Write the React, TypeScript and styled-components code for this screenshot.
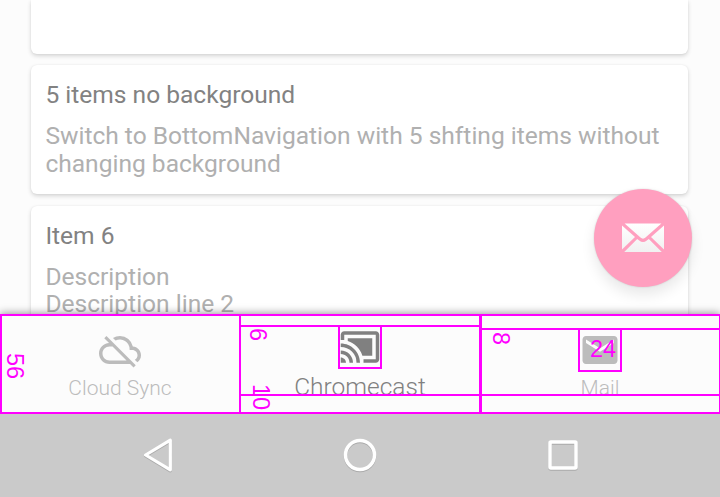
import React from "react";
import styled, { createGlobalStyle } from "styled-components";
import { MdCastConnected, MdCloudOff, MdEmail } from "react-icons/md";

const GUIDE = "#ff00ff";

const GlobalStyle = createGlobalStyle`
  * { box-sizing: border-box; }
  body {
    margin: 0;
    background: #fcfcfc;
    font-family: Roboto, "Liberation Sans", sans-serif;
  }
`;

const Screen = styled.div`
  position: relative;
  display: flex;
  flex-direction: column;
  width: 720px;
  height: 497px;
  overflow: hidden;
  background: #fcfcfc;
`;

const List = styled.main`
  display: flex;
  flex-direction: column;
  gap: 11.5px;
  height: 314px;
  flex: none;
  padding: 0 31.6px 0 31.4px;
`;

const Card = styled.article<{ $height: number; $continued?: boolean }>`
  flex: none;
  height: ${(p) => p.$height}px;
  padding: 16px 14px;
  background: #fff;
  border-radius: ${(p) => (p.$continued ? "0 0 6px 6px" : "6px")};
  box-shadow: 0 2px 4px rgba(0, 0, 0, 0.16), 0 0 2px rgba(0, 0, 0, 0.06);
`;

const Title = styled.h2`
  margin: 0 0 13px;
  font-size: 24.55px;
  line-height: 28px;
  font-weight: 400;
  color: #828282;
`;

const Description = styled.p`
  margin: 0;
  font-size: 24.55px;
  line-height: 27.5px;
  color: #b0b0b0;
  white-space: pre-line;
`;

const Fab = styled.button`
  position: absolute;
  left: 594px;
  top: 189px;
  width: 98px;
  height: 98px;
  display: grid;
  place-items: center;
  padding: 0;
  border: 0;
  border-radius: 50%;
  background: #ff9fbf;
  box-shadow: 0 8px 14px rgba(0, 0, 0, 0.09), 0 0 2px rgba(0, 0, 0, 0.15);
`;

const Tabs = styled.nav`
  position: relative;
  display: grid;
  grid-template-columns: repeat(3, 1fr);
  height: 100px;
  flex: none;
  background: #fcfcfc;
  box-shadow: 0 -1px 8px rgba(0, 0, 0, 0.4);
`;

const Tab = styled.div<{ $active?: boolean }>`
  display: flex;
  flex-direction: column;
  align-items: center;
  padding-top: ${(p) => (p.$active ? 11.5 : 15)}px;
  color: ${(p) => (p.$active ? "#808080" : "#bcbcbc")};

  svg {
    display: block;
    width: 42px;
    height: 42px;
    flex: none;
  }
`;

const TabLabel = styled.span<{ $active?: boolean }>`
  margin-top: ${(p) => (p.$active ? 5 : 3)}px;
  font-size: ${(p) => (p.$active ? 24.5 : 21)}px;
  line-height: 28px;
  font-weight: 300;
`;

const SystemBar = styled.footer`
  position: relative;
  display: grid;
  grid-template-columns: 202.5px 202.5px 202.5px;
  justify-content: center;
  align-items: center;
  justify-items: center;
  flex: 1;
  padding-bottom: 1px;
  background: #cacaca;

  svg {
    display: block;
    filter: drop-shadow(0 1px 0.5px rgba(0, 0, 0, 0.16));
  }
`;

const GuideBox = styled.div<{ $x: number; $y: number; $w: number; $h: number }>`
  position: absolute;
  left: ${(p) => p.$x}px;
  top: ${(p) => p.$y}px;
  width: ${(p) => p.$w}px;
  height: ${(p) => p.$h}px;
  border: 2px solid ${GUIDE};
`;

const Measure = styled.span<{ $x: number; $y: number; $upright?: boolean }>`
  position: absolute;
  left: ${(p) => p.$x}px;
  top: ${(p) => p.$y}px;
  font-family: "Liberation Sans", Arial, sans-serif;
  font-size: 23.5px;
  line-height: 24px;
  color: ${GUIDE};
  writing-mode: ${(p) => (p.$upright ? "horizontal-tb" : "vertical-rl")};
`;

const Envelope = () => (
  <svg width="42" height="30" viewBox="0 0 42 30">
    <defs>
      <linearGradient id="paper" x1="0" y1="0" x2="0" y2="30" gradientUnits="userSpaceOnUse">
        <stop offset="0" stopColor="#fff" />
        <stop offset="1" stopColor="#f0f0f0" />
      </linearGradient>
    </defs>
    <g fill="url(#paper)">
      <path d="M2.6 .5H39.4L23.5 14.6Q21 16.9 18.5 14.6Z" />
      <path d="M0 2.4L13 14.1L0 26.4Z" />
      <path d="M42 2.4L29 14.1L42 26.4Z" />
      <path d="M2.2 29L15.2 16L17.2 17.6Q21 20.6 24.8 17.6L26.8 16L39.8 29Z" />
    </g>
  </svg>
);

const App = () => (
  <>
    <GlobalStyle />
    <Screen>
      <List>
        <Card $height={53.5} $continued />
        <Card $height={129}>
          <Title>5 items no background</Title>
          <Description>
            Switch to BottomNavigation with 5 shfting items without changing background
          </Description>
        </Card>
        <Card $height={129}>
          <Title>Item 6</Title>
          <Description>{"Description\nDescription line 2"}</Description>
        </Card>
      </List>
      <Fab aria-label="Compose">
        <Envelope />
      </Fab>
      <Tabs>
        <Tab>
          <MdCloudOff />
          <TabLabel>Cloud Sync</TabLabel>
        </Tab>
        <Tab $active>
          <MdCastConnected />
          <TabLabel $active>Chromecast</TabLabel>
        </Tab>
        <Tab>
          <MdEmail />
          <TabLabel>Mail</TabLabel>
        </Tab>
        <GuideBox $x={0} $y={0} $w={241} $h={100} />
        <GuideBox $x={239} $y={0} $w={242} $h={100} />
        <GuideBox $x={239} $y={11} $w={242} $h={71} />
        <GuideBox $x={480} $y={0} $w={241} $h={100} />
        <GuideBox $x={480} $y={14} $w={241} $h={68} />
        <GuideBox $x={239} $y={80} $w={482} $h={20} />
        <GuideBox $x={338} $y={11} $w={44} $h={44} />
        <GuideBox $x={578} $y={14} $w={44} $h={44} />
        <Measure $x={3} $y={39}>56</Measure>
        <Measure $x={246} $y={14}>6</Measure>
        <Measure $x={249} $y={70}>10</Measure>
        <Measure $x={489} $y={18}>8</Measure>
        <Measure $x={590} $y={23} $upright>24</Measure>
      </Tabs>
      <SystemBar>
        <svg width="34" height="38" viewBox="0 0 34 38">
          <path d="M29.3 4.2V33.8L4.6 19Z" fill="none" stroke="#fff" strokeWidth="3.2" strokeLinejoin="round" />
        </svg>
        <svg width="36" height="36" viewBox="0 0 36 36">
          <circle cx="18" cy="18" r="14.5" fill="none" stroke="#fff" strokeWidth="3.5" />
        </svg>
        <svg width="34" height="34" viewBox="0 0 34 34">
          <rect x="4" y="4" width="26" height="26" rx="1" fill="none" stroke="#fff" strokeWidth="3.5" />
        </svg>
      </SystemBar>
    </Screen>
  </>
);

export default App;
